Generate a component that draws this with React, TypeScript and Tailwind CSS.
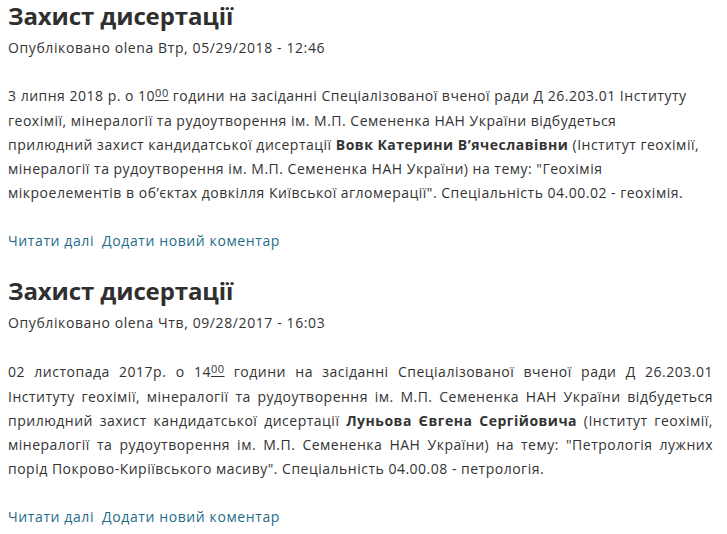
import React from 'react';

type Line = React.ReactNode;

const Sup: React.FC<{ children: React.ReactNode }> = ({ children }) => (
    <span className="relative top-[-4px] text-[11px] underline underline-offset-[3px]">{children}</span>
);

interface PostProps {
    meta: string;
    lines: Line[];
    justify?: boolean;
    bodyGap: string;
    linksGap: string;
}

const Post: React.FC<PostProps> = ({ meta, lines, justify, bodyGap, linksGap }) => (
    <div className="px-2">
        <h2 className="text-[24px] leading-[30px] font-bold tracking-[-0.1px] text-[#2f2f2f]">Захист дисертації</h2>
        <div className="mt-[7px] text-[14px] leading-[20px] tracking-[0.6px] text-[#333333]">{meta}</div>
        <div className={`${bodyGap} text-[14px] leading-[24px] tracking-[0.5px] text-[#333333]`}>
            {lines.map((line, i) => (
                <div
                    key={i}
                    className={`whitespace-nowrap ${justify && i < lines.length - 1 ? 'w-[705px] text-justify [text-align-last:justify]' : ''}`}
                >
                    {line}
                </div>
            ))}
        </div>
        <div className={`${linksGap} flex gap-[8px] text-[14px] leading-[20px] tracking-[0.6px] text-[#1f6c87]`}>
            <a href="#">Читати далі</a>
            <a href="#">Додати новий коментар</a>
        </div>
    </div>
);

const App: React.FC = () => {
    const first: Line[] = [
        <>3 липня 2018 р. о 10<Sup>00</Sup> години на засіданні Спеціалізованої вченої ради Д 26.203.01 Інституту</>,
        <>геохімії, мінералогії та рудоутворення ім. М.П. Семененка НАН України відбудеться</>,
        <>прилюдний захист кандидатської дисертації <b>Вовк Катерини В’ячеславівни</b> (Інститут геохімії,</>,
        <>мінералогії та рудоутворення ім. М.П. Семененка НАН України) на тему: "Геохімія</>,
        <>мікроелементів в об’єктах довкілля Київської агломерації". Спеціальність 04.00.02 - геохімія.</>,
    ];
    const second: Line[] = [
        <>02 листопада 2017р. о 14<Sup>00</Sup> години на засіданні Спеціалізованої вченої ради Д 26.203.01</>,
        <>Інституту геохімії, мінералогії та рудоутворення ім. М.П. Семененка НАН України відбудеться</>,
        <>прилюдний захист кандидатської дисертації <b>Луньова Євгена Сергійовича</b> (Інститут геохімії,</>,
        <>мінералогії та рудоутворення ім. М.П. Семененка НАН України) на тему: "Петрологія лужних</>,
        <>порід Покрово-Киріївського масиву". Спеціальність 04.00.08 - петрологія.</>,
    ];

    return (
        <div className="min-h-screen bg-white pt-[1px] font-['Open_Sans',sans-serif]">
            <Post
                meta="Опубліковано olena Втр, 05/29/2018 - 12:46"
                lines={first}
                bodyGap="mt-[26px]"
                linksGap="mt-[26px]"
            />
            <div className="mt-[25px]">
                <Post
                    meta="Опубліковано olena Чтв, 09/28/2017 - 16:03"
                    lines={second}
                    justify
                    bodyGap="mt-[27px]"
                    linksGap="mt-[26px]"
                />
            </div>
        </div>
    );
};

export default App;
